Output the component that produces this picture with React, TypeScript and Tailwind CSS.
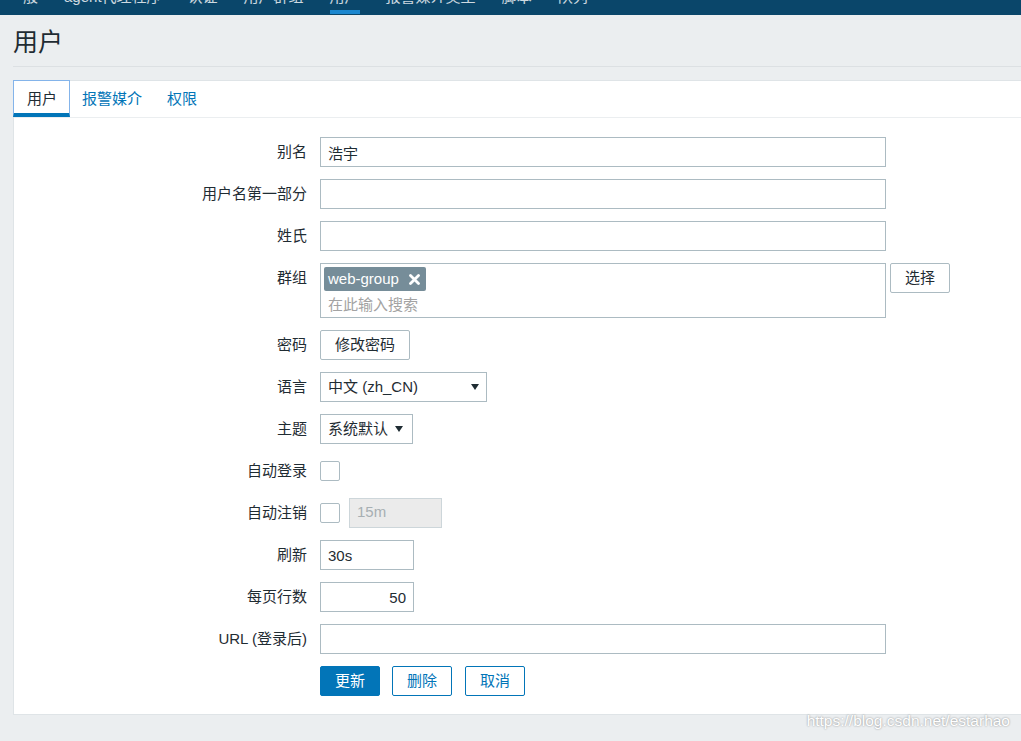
import React from "react";

const navItems = [
  "一般",
  "agent代理程序",
  "认证",
  "用户群组",
  "用户",
  "报警媒介类型",
  "脚本",
  "队列",
];

const tabs = ["用户", "报警媒介", "权限"];

function TopNav() {
  return (
    <div className="h-[15px] overflow-hidden bg-[#0a466a]">
      <div className="-mt-[12px] flex gap-[26px] pl-[8px]">
        {navItems.map((item) => (
          <div key={item} className="flex flex-col">
            <span className="whitespace-nowrap text-[15px] leading-[18px] text-white/80">
              {item}
            </span>
            <span
              className={
                item === "用户"
                  ? "mt-[4px] h-[4px] bg-[#1b87cf]"
                  : "mt-[4px] h-[4px]"
              }
            />
          </div>
        ))}
      </div>
    </div>
  );
}

function Tabs() {
  return (
    <div className="flex border-b border-[#ebeef0]">
      {tabs.map((tab, i) =>
        i === 0 ? (
          <div
            key={tab}
            className="-mt-px -ml-px border-x border-t border-b-4 border-x-[#84b4ea] border-t-[#84b4ea] border-b-[#0275b8] pt-[9px] pb-[5px] pl-[13px] pr-[12px] text-[15px] leading-[18px] text-[#1f2c33]"
          >
            {tab}
          </div>
        ) : (
          <div
            key={tab}
            className="-mt-px border-t border-b-4 border-transparent pt-[9px] pb-[5px] pl-[12px] pr-[13px] text-[15px] leading-[18px] text-[#0275b8]"
          >
            {tab}
          </div>
        )
      )}
    </div>
  );
}

function Label({ text, lh = "leading-[30px]" }: { text: string; lh?: string }) {
  return (
    <div className={`mr-[13px] w-[293px] shrink-0 text-right text-[15px] ${lh}`}>
      {text}
    </div>
  );
}

function Arrow() {
  return (
    <svg width="8" height="6" viewBox="0 0 8 6" className="shrink-0">
      <path d="M0 0 H8 L4 6 Z" fill="#1f2c33" />
    </svg>
  );
}

const inputCls =
  "h-[30px] border border-[#acbbc2] bg-white px-[7px] text-[15px] text-[#1f2c33] outline-none";

const checkboxCls =
  "h-[20px] w-[20px] shrink-0 rounded-[2px] border border-[#acbbc2] bg-white";

export default function App() {
  return (
    <div className="min-h-screen bg-[#ebeef0] font-['Liberation_Sans','Noto_Sans_CJK_SC',sans-serif] text-[#1f2c33]">
      <TopNav />
      <div className="pl-[13px]">
        <div className="border-b border-[#dce0e3] pt-[12px] pb-[9px]">
          <h1 className="text-[25px] font-normal leading-[30px]">用户</h1>
        </div>

        <div className="mt-[13px] border-y border-l border-[#dfe4e7] bg-white">
          <Tabs />

          <div className="flex flex-col gap-3 pt-[19px] pb-[18px]">
            <div className="flex items-start">
              <Label text="别名" />
              <input className={`${inputCls} w-[566px]`} defaultValue="浩宇" readOnly />
            </div>

            <div className="flex items-start">
              <Label text="用户名第一部分" />
              <input className={`${inputCls} w-[566px]`} readOnly />
            </div>

            <div className="flex items-start">
              <Label text="姓氏" />
              <input className={`${inputCls} w-[566px]`} readOnly />
            </div>

            <div className="flex items-start">
              <Label text="群组" />
              <div className="h-[55px] w-[566px] border border-[#acbbc2] bg-white pt-[3px] pl-[3px]">
                <div className="flex h-[24px] w-fit items-center rounded-[2px] bg-[#768d99] pl-[4px] pr-[6px] text-[15px] leading-[24px] text-white">
                  <span>web-group</span>
                  <svg width="11" height="11" viewBox="0 0 11 11" className="ml-[10px]">
                    <path
                      d="M1.5 1.5 L9.5 9.5 M9.5 1.5 L1.5 9.5"
                      stroke="#ffffff"
                      strokeWidth="2.8"
                      strokeLinecap="round"
                    />
                  </svg>
                </div>
                <div className="mt-[3px] ml-[4px] text-[15px] leading-[22px] text-[#a3a3a3]">
                  在此输入搜索
                </div>
              </div>
              <button className="ml-[4px] h-[30px] w-[60px] rounded-[2px] border border-[#acbbc2] bg-white text-[15px] text-[#1f2c33]">
                选择
              </button>
            </div>

            <div className="flex items-start">
              <Label text="密码" />
              <button className="h-[30px] w-[90px] rounded-[2px] border border-[#acbbc2] bg-white text-[15px] text-[#1f2c33]">
                修改密码
              </button>
            </div>

            <div className="flex items-start">
              <Label text="语言" />
              <div className="flex h-[30px] w-[167px] items-center justify-between border border-[#acbbc2] bg-white pl-[7px] pr-[7px] text-[15px]">
                <span>中文 (zh_CN)</span>
                <Arrow />
              </div>
            </div>

            <div className="flex items-start">
              <Label text="主题" />
              <div className="flex h-[30px] w-[93px] items-center justify-between border border-[#acbbc2] bg-white pl-[7px] pr-[9px] text-[15px]">
                <span>系统默认</span>
                <Arrow />
              </div>
            </div>

            <div className="flex h-[29px] items-center">
              <Label text="自动登录" lh="leading-[29px]" />
              <div className={checkboxCls} />
            </div>

            <div className="flex h-[31px] items-center">
              <Label text="自动注销" lh="leading-[31px]" />
              <div className={checkboxCls} />
              <div className="ml-[9px] flex h-[30px] w-[93px] items-center border border-[#cdd6da] bg-[#ebebeb] px-[7px] text-[15px] text-[#a7afb3]">
                15m
              </div>
            </div>

            <div className="flex items-start">
              <Label text="刷新" />
              <input className={`${inputCls} w-[94px]`} defaultValue="30s" readOnly />
            </div>

            <div className="flex items-start">
              <Label text="每页行数" />
              <input className={`${inputCls} w-[94px] text-right`} defaultValue="50" readOnly />
            </div>

            <div className="flex items-start">
              <Label text="URL (登录后)" />
              <input className={`${inputCls} w-[566px]`} readOnly />
            </div>

            <div className="flex items-start">
              <div className="mr-[13px] w-[293px] shrink-0" />
              <button className="h-[30px] w-[60px] rounded-[2px] border border-[#0275b8] bg-[#0275b8] text-[15px] text-white">
                更新
              </button>
              <button className="ml-[12px] h-[30px] w-[60px] rounded-[2px] border border-[#0275b8] bg-white text-[15px] text-[#0275b8]">
                删除
              </button>
              <button className="ml-[13px] h-[30px] w-[60px] rounded-[2px] border border-[#0275b8] bg-white text-[15px] text-[#0275b8]">
                取消
              </button>
            </div>
          </div>
        </div>

        <div className="-mt-[3px] pr-[11px] text-right text-[15.5px] leading-[18px] text-white [text-shadow:0_0_2px_rgba(0,0,0,0.45)]">
          https://blog.csdn.net/estarhao
        </div>
      </div>
    </div>
  );
}
